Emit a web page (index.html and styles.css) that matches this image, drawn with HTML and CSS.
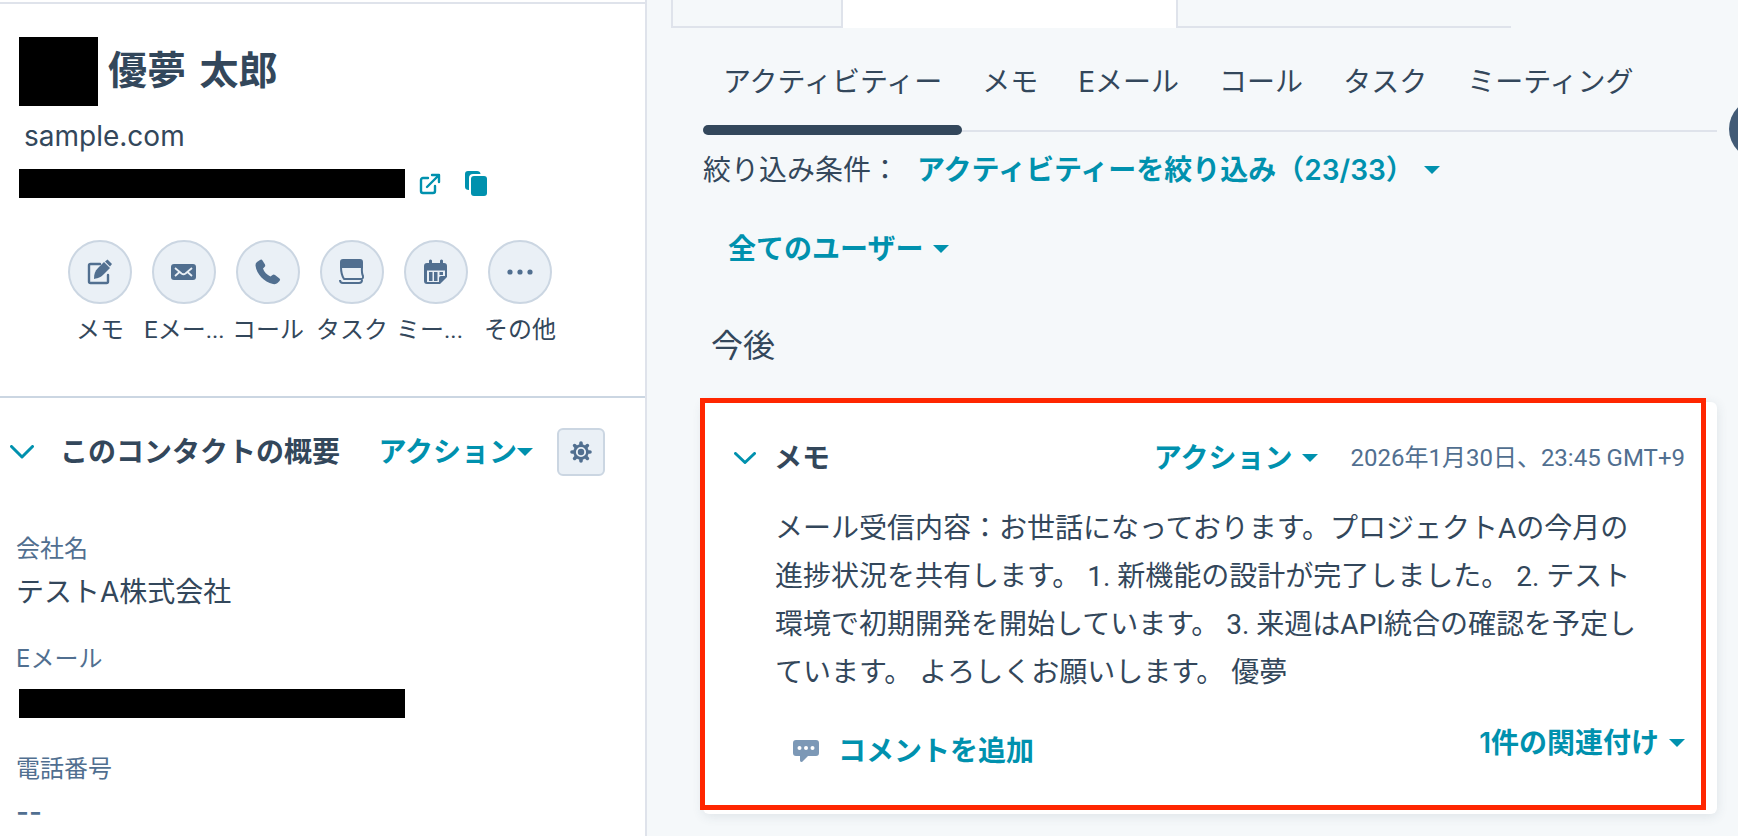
FILE: index.html
```
<!DOCTYPE html>
<html lang="ja">
<head>
  <meta charset="UTF-8" />
  <meta name="viewport" content="width=device-width, initial-scale=1.0"/>
  <title>優夢 太郎</title>
  <link rel="stylesheet" href="styles.css">
</head>
<body>
  <div class="layout">
    <aside class="sidebar">
      <section class="profile">
        <div class="name-row">
          <span class="mask mask-name"></span>
          <h1>優夢 太郎</h1>
        </div>
        <p class="domain">sample.com</p>
        <div class="mail-row">
          <span class="mask mask-line"></span>
          <a href="#" class="icon-link" aria-label="Eメールを開く">
            <svg width="22" height="22" viewBox="0 0 22 22" fill="none" stroke="currentColor" stroke-width="2.4" stroke-linecap="round" stroke-linejoin="round"><path d="M9 5H4a2 2 0 0 0-2 2v11a2 2 0 0 0 2 2h10a2 2 0 0 0 2-2v-5"/><path d="M8 14L19 3M13 2h7v7"/></svg>
          </a>
          <button class="icon-link" aria-label="コピー">
            <svg width="22" height="26" viewBox="0 0 22 26" fill="currentColor"><path d="M3 0h9c2 0 3.500 1 3.500 3H8C5.500 3 4 4.500 4 7v12C1.500 19 0 18 0 16V3c0-2 1-3 3-3z"/><rect x="6" y="5" width="16" height="20" rx="3"/></svg>
          </button>
        </div>

        <div class="quick-actions">
          <button class="quick">
            <span class="circle"><svg width="26" height="26" viewBox="0 0 26 26"><path d="M13 5H3.500Q2 5 2 6.500v16Q2 24 3.500 24h16q1.500 0 1.500-1.500V16" fill="none" stroke="currentColor" stroke-width="2.400" stroke-linecap="round"/><path d="M7 20c0-5 1-8 4-11l6-6 6 6-6 6c-3 3-5 4-10 5z" fill="currentColor"/><path d="M18 2.500L20.500.500l4.500 4.500-2 2.500z" fill="currentColor"/></svg></span>
            <span class="quick-label">メモ</span>
          </button>
          <button class="quick">
            <span class="circle"><svg width="26" height="18" viewBox="0 0 26 18"><rect x="0" y="1" width="25" height="16" rx="3" fill="currentColor"/><path d="M4 5l6.500 5.500Q12.500 12 14.500 10.500L21 5M4 13l4.500-4M21 13l-4.500-4" fill="none" stroke="#eaf0f6" stroke-width="1.800"/></svg></span>
            <span class="quick-label clipped">Eメー...</span>
          </button>
          <button class="quick">
            <span class="circle"><svg width="26" height="26" viewBox="0 0 26 26"><path d="M5 1Q6.500 0 7.500 1.500l2.500 4q.800 1.500-.500 2.500L8 9.500c1 3.500 4 6.500 7.500 8l2-1.500q1.200-1 2.500 0l4.500 3.500q1.300 1.200 0 2.500l-2 2Q21 25.500 18 25C9 23 1.500 15 .500 6.500Q.300 4 2 3z" fill="currentColor"/></svg></span>
            <span class="quick-label">コール</span>
          </button>
          <button class="quick">
            <span class="circle"><svg width="26" height="26" viewBox="0 0 26 26" fill="none" stroke="currentColor" stroke-width="2" stroke-linejoin="round"><path d="M2 3q0-2 2-2h17q2 0 2 2v5H2z" fill="currentColor"/><path d="M2 8c0 5 1 9 3 12h18q1.500-1 1-3-1.500-3-1-9M1 21q0 3 3 3h16q3 0 3-3"/></svg></span>
            <span class="quick-label">タスク</span>
          </button>
          <button class="quick">
            <span class="circle"><svg width="24" height="26" viewBox="0 0 24 26"><path d="M3 4h2V1.500q1.500-2 3 0V4h8V1.500q1.500-2 3 0V4h1q3 0 3 3v11l-7 7H3q-3 0-3-3V7q0-3 3-3z" fill="currentColor"/><path d="M3 11.500h18v5.500h-4q-2 0-2 2v4H3z" fill="#eaf0f6"/><path d="M5 13h3.500v9H5zM10 13h3.500v9H10zM15.500 13H19v3h-3.500z" fill="currentColor"/></svg></span>
            <span class="quick-label clipped">ミー...</span>
          </button>
          <button class="quick">
            <span class="circle"><svg width="26" height="6" viewBox="0 0 26 6" fill="currentColor"><circle cx="3" cy="3" r="2.600"/><circle cx="13" cy="3" r="2.600"/><circle cx="23" cy="3" r="2.600"/></svg></span>
            <span class="quick-label">その他</span>
          </button>
        </div>
      </section>

      <section class="about">
        <div class="about-header">
          <button class="toggle" aria-label="折りたたむ"><svg width="24" height="14" viewBox="0 0 24 14"><path d="M1.500 1.500L12 12 22.500 1.500"/></svg></button>
          <h2>このコンタクトの概要</h2>
          <button class="link about-action">アクション<span class="caret"></span></button>
          <button class="gear" aria-label="設定">
            <svg width="22" height="22" viewBox="0 0 22 22" fill="none" stroke="currentColor"><circle cx="11" cy="11" r="6.400" stroke-width="2.600"/><circle cx="11" cy="11" r="3.200" fill="currentColor" stroke="none"/><path d="M11 2v2M11 18v2M2 11h2M18 11h2M4.600 4.600l1.400 1.400M16 16l1.400 1.400M4.600 17.400L6 16M16 6l1.400-1.400" stroke-width="3.600" stroke-linecap="round"/></svg>
          </button>
        </div>
        <dl class="fields">
          <div class="field"><dt>会社名</dt><dd>テストA株式会社</dd></div>
          <div class="field"><dt>Eメール</dt><dd><span class="mask mask-line"></span></dd></div>
          <div class="field"><dt>電話番号</dt><dd class="empty">--</dd></div>
        </dl>
      </section>
    </aside>

    <main class="content">
      <div class="top-tabs">
        <span class="top-tab"></span>
        <span class="top-tab top-tab-active"></span>
        <span class="top-tab top-tab-rest"></span>
      </div>

      <nav class="tabs">
        <a href="#" class="tab active">アクティビティー</a>
        <a href="#" class="tab">メモ</a>
        <a href="#" class="tab">Eメール</a>
        <a href="#" class="tab">コール</a>
        <a href="#" class="tab">タスク</a>
        <a href="#" class="tab">ミーティング</a>
      </nav>

      <div class="filters">
        <span>絞り込み条件：</span>
        <button class="link">アクティビティーを絞り込み（23/33）<span class="caret"></span></button>
      </div>
      <button class="link users">全てのユーザー<span class="caret"></span></button>

      <h3>今後</h3>

      <article class="card">
        <header class="card-header">
          <button class="toggle" aria-label="折りたたむ"><svg width="22" height="12" viewBox="0 0 22 12"><path d="M1.500 1.500L11 10.500 20.500 1.500"/></svg></button>
          <h4>メモ</h4>
          <button class="link card-action">アクション<span class="caret"></span></button>
          <time datetime="2026-01-30T23:45+09:00">2026年1月30日、23:45 GMT+9</time>
        </header>
        <p class="card-text">メール受信内容：お世話になっております。プロジェクトAの今月の進捗状況を共有します。 1. 新機能の設計が完了しました。 2. テスト環境で初期開発を開始しています。 3. 来週はAPI統合の確認を予定しています。 よろしくお願いします。 優夢</p>
        <footer class="card-footer">
          <button class="link comment">
            <svg width="26" height="22" viewBox="0 0 26 22"><path d="M3 0h20q3 0 3 3v10q0 3-3 3h-8l-6 6q-2 0-2-1.500V16H3q-3 0-3-3V3q0-3 3-3z" fill="#7c98b6"/><g fill="#fff"><circle cx="6.500" cy="8" r="2"/><circle cx="13" cy="8" r="2"/><circle cx="19.500" cy="8" r="2"/></g></svg>
            コメントを追加
          </button>
          <button class="link">1件の関連付け<span class="caret"></span></button>
        </footer>
        <span class="highlight"></span>
      </article>
      <span class="side-handle"></span>
    </main>
  </div>
</body>
</html>
```

FILE: styles.css
```
* {
  box-sizing: border-box;
}

body {
  margin: 0;
  font-family: Inter, 'Noto Sans CJK JP', sans-serif;
  font-size: 28px;
  line-height: 40px;
  color: #33475b;
  background: #f5f8fa;
}

h1, h2, h3, h4, p, dl, dd {
  margin: 0;
}

h2, h4 {
  font-size: 28px;
  font-weight: 600;
}

a {
  color: inherit;
  text-decoration: none;
}

button {
  font: inherit;
  color: inherit;
  background: none;
  border: none;
  padding: 0;
  cursor: pointer;
}

svg {
  display: block;
  flex: none;
}

.layout {
  display: flex;
  height: 100vh;
  overflow: hidden;
}

/* left column */
.sidebar {
  flex: 0 0 647px;
  background: #fff;
  border-right: 2px solid #dfe3eb;
  padding-top: 2px;
  overflow: hidden;
}

.profile {
  height: 396px;
  border-top: 2px solid #dfe3eb;
  border-bottom: 2px solid #cbd6e2;
  padding: 33px 19px 0;
}

.mask {
  display: block;
  background: #000;
}

.mask-name {
  width: 79px;
  height: 69px;
}

.mask-line {
  width: 386px;
  height: 29px;
}

.name-row {
  display: flex;
  align-items: center;
  gap: 10px;
}

h1 {
  font-family: 'DejaVu Sans', 'Noto Sans CJK JP', sans-serif;
  font-size: 39px;
  font-weight: 600;
  padding-bottom: 2px;
}

.domain {
  padding: 10px 5px 13px;
}

.mail-row {
  display: flex;
  align-items: center;
}

.icon-link {
  color: #0091ae;
  margin-left: 14px;
}

.icon-link + .icon-link {
  margin-left: 24px;
}

.quick-actions {
  display: flex;
  gap: 4px;
  padding: 42px 0 0 41px;
}

.quick {
  width: 80px;
}

.circle {
  display: flex;
  align-items: center;
  justify-content: center;
  width: 64px;
  height: 64px;
  margin: 0 auto;
  color: #516f90;
  background: #eaf0f6;
  border: 2px solid #cbd6e2;
  border-radius: 50%;
}

.quick-label {
  display: block;
  font-family: Roboto, 'Noto Sans CJK JP', sans-serif;
  font-size: 24px;
  line-height: 36px;
  margin-top: 8px;
  white-space: nowrap;
}

.quick-label.clipped {
  text-align: left;
}

.about-header {
  display: flex;
  align-items: center;
  padding: 30px 40px 0 10px;
}

.toggle path {
  fill: none;
  stroke: #0091ae;
  stroke-width: 3;
  stroke-linecap: round;
  stroke-linejoin: round;
}

.about-header h2 {
  margin-left: 26px;
}

.link {
  display: flex;
  align-items: center;
  color: #0091ae;
  font-weight: 600;
}

.caret {
  border: 8px solid transparent;
  border-top-color: #0091ae;
  border-bottom: none;
  margin-left: 10px;
}

.about-action {
  margin-left: auto;
}

.about-action .caret {
  margin-left: 0;
}

.gear {
  display: flex;
  align-items: center;
  justify-content: center;
  width: 48px;
  height: 48px;
  margin-left: 24px;
  color: #516f90;
  background: #eaf0f6;
  border: 2px solid #cbd6e2;
  border-radius: 6px;
}

.fields {
  padding: 53px 16px 0;
}

.field {
  height: 110px;
}

.field dt {
  font-size: 24px;
  color: #516f90;
}

.field dd {
  padding-top: 3px;
}

.field .mask {
  margin: 7px 3px 0;
}

.field .empty {
  color: #516f90;
  font-weight: 500;
}

/* right column */
.content {
  flex: 1;
  min-width: 0;
  position: relative;
  padding: 0 21px 0 24px;
}

.top-tabs {
  display: flex;
  height: 28px;
  margin-right: 206px;
}

.top-tab {
  flex: 0 0 172px;
  border: solid #dfe3eb;
  border-width: 0 2px 2px;
}

.top-tab-active {
  flex-basis: 333px;
  background: #fff;
  border: none;
}

.top-tab-rest {
  flex: 1;
  border-right: none;
}

.tabs {
  display: flex;
  margin: 34px 0 0 32px;
  border-bottom: 2px solid #dfe3eb;
}

.tab {
  position: relative;
  padding: 0 20px 28px;
  white-space: nowrap;
}

.tab.active::after {
  content: '';
  position: absolute;
  left: 0;
  right: 0;
  bottom: -5px;
  height: 10px;
  border-radius: 5px;
  background: #33475b;
}

.filters {
  display: flex;
  gap: 18px;
  margin: 18px 0 0 32px;
}

.users {
  margin: 39px 0 0 57px;
}

h3 {
  font-size: 32px;
  font-weight: 400;
  margin: 57px 0 0 40px;
}

.card {
  position: relative;
  margin: 36px 0 0 32px;
  padding: 36px 32px 43px 31px;
  background: #fff;
  border-radius: 6px;
  box-shadow: 0 2px 12px rgba(51, 71, 91, 0.12);
}

.card-header {
  display: flex;
  align-items: center;
}

.card h4 {
  margin-left: 18px;
}

.card-action {
  margin-left: auto;
}

time {
  margin-left: 32px;
  font-family: Roboto, 'Noto Sans CJK JP', sans-serif;
  font-size: 24px;
  color: #516f90;
}

.card-text {
  padding: 27px 40px 0 41px;
  font-family: Roboto, 'Noto Sans CJK JP', sans-serif;
  line-height: 48px;
}

.card-footer {
  display: flex;
  justify-content: space-between;
  align-items: flex-start;
  padding: 26px 0 0 59px;
}

.comment {
  gap: 19px;
  margin-top: 8px;
}

/* red frame over the memo card */
.highlight {
  position: absolute;
  top: -4px;
  left: -3px;
  right: 11px;
  bottom: 4px;
  border: 5px solid #ff2600;
  pointer-events: none;
}

.side-handle {
  position: absolute;
  top: 98px;
  right: -53px;
  width: 62px;
  height: 62px;
  border-radius: 50%;
  background: #425b76;
}
```
